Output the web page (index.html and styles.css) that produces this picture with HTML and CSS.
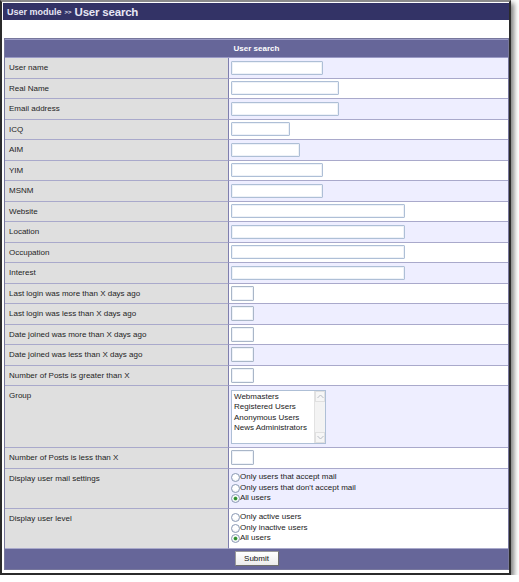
FILE: index.html
```html
<!DOCTYPE html>
<html lang="en">
<head>
<meta charset="utf-8">
<title>User search</title>
<link rel="stylesheet" href="styles.css">
</head>
<body>
<div class="window">
  <div class="titlebar"><span class="crumb">User module</span><span class="sep">&gt;&gt;</span><span class="title">User search</span></div>
  <form class="search">
    <table class="grid">
      <thead>
        <tr><th colspan="2">User search</th></tr>
      </thead>
      <tbody>
        <tr><td class="label">User name</td><td class="field"><input class="text w92" type="text"></td></tr>
        <tr><td class="label">Real Name</td><td class="field"><input class="text w108" type="text"></td></tr>
        <tr><td class="label">Email address</td><td class="field"><input class="text w108" type="text"></td></tr>
        <tr><td class="label">ICQ</td><td class="field"><input class="text w59" type="text"></td></tr>
        <tr><td class="label">AIM</td><td class="field"><input class="text w69" type="text"></td></tr>
        <tr><td class="label">YIM</td><td class="field"><input class="text w92" type="text"></td></tr>
        <tr><td class="label">MSNM</td><td class="field"><input class="text w92" type="text"></td></tr>
        <tr><td class="label">Website</td><td class="field"><input class="text w174" type="text"></td></tr>
        <tr><td class="label">Location</td><td class="field"><input class="text w174" type="text"></td></tr>
        <tr><td class="label">Occupation</td><td class="field"><input class="text w174" type="text"></td></tr>
        <tr><td class="label">Interest</td><td class="field"><input class="text w174" type="text"></td></tr>
        <tr><td class="label">Last login was more than X days ago</td><td class="field"><input class="text days" type="text"></td></tr>
        <tr><td class="label">Last login was less than X days ago</td><td class="field"><input class="text days" type="text"></td></tr>
        <tr><td class="label">Date joined was more than X days ago</td><td class="field"><input class="text days" type="text"></td></tr>
        <tr><td class="label">Date joined was less than X days ago</td><td class="field"><input class="text days" type="text"></td></tr>
        <tr><td class="label">Number of Posts is greater than X</td><td class="field"><input class="text days" type="text"></td></tr>
        <tr class="tall-group">
          <td class="label">Group</td>
          <td class="field top">
            <div class="listbox" role="listbox" aria-multiselectable="true">
              <ul class="options">
                <li>Webmasters</li>
                <li>Registered Users</li>
                <li>Anonymous Users</li>
                <li>News Administrators</li>
              </ul>
              <div class="scrollbar">
                <span class="arrow up"><svg width="7" height="5" viewBox="0 0 7 5"><path d="M0.5 4 L3.5 1 L6.5 4" fill="none" stroke="#b8bcc4" stroke-width="1"/></svg></span>
                <span class="track"></span>
                <span class="arrow down"><svg width="7" height="5" viewBox="0 0 7 5"><path d="M0.5 1 L3.5 4 L6.5 1" fill="none" stroke="#b8bcc4" stroke-width="1"/></svg></span>
              </div>
            </div>
          </td>
        </tr>
        <tr><td class="label">Number of Posts is less than X</td><td class="field"><input class="text days" type="text"></td></tr>
        <tr class="tall-radio">
          <td class="label">Display user mail settings</td>
          <td class="field">
            <label class="opt"><input type="radio" name="mail">Only users that accept mail</label>
            <label class="opt"><input type="radio" name="mail">Only users that don't accept mail</label>
            <label class="opt"><input type="radio" name="mail" checked>All users</label>
          </td>
        </tr>
        <tr class="tall-radio">
          <td class="label">Display user level</td>
          <td class="field">
            <label class="opt"><input type="radio" name="level">Only active users</label>
            <label class="opt"><input type="radio" name="level">Only inactive users</label>
            <label class="opt"><input type="radio" name="level" checked>All users</label>
          </td>
        </tr>
      </tbody>
      <tfoot>
        <tr><td colspan="2" class="actions"><button type="submit" class="submit">Submit</button></td></tr>
      </tfoot>
    </table>
  </form>
</div>
</body>
</html>
```

FILE: styles.css
```css
* { box-sizing: border-box; }

html, body {
  margin: 0;
  padding: 0;
  background: #ffffff;
}

body {
  font-family: "Liberation Sans", Arial, sans-serif;
  color: #222222;
}

.window {
  width: 511px;
  height: 575px;
  background: #ffffff;
  border: 2px solid #2b2b2b;
  border-top: 2px solid #8a8a8a;
  padding: 1px 0 0 1px;
  box-shadow: 3px 3px 5px rgba(0, 0, 0, 0.5);
}

.titlebar {
  height: 17px;
  background: #333366;
  color: #e6e6f4;
  padding-left: 4px;
  display: flex;
  align-items: center;
  white-space: nowrap;
}

.crumb {
  font-size: 9px;
  font-weight: bold;
}

.sep {
  font-size: 6px;
  font-weight: bold;
  margin: 1px 3px 0 3px;
}

.title {
  font-size: 11.5px;
  font-weight: bold;
  letter-spacing: -0.2px;
}

.search {
  margin: 18px 0 0 1px;
}

.grid {
  width: 505px;
  border-collapse: separate;
  border-spacing: 0;
  border: 1px solid #77779c;
  font-size: 8px;
}

.grid th {
  height: 19px;
  background: #666699;
  color: #ffffff;
  font-weight: bold;
  font-size: 8px;
  text-align: center;
  border-top: 1px solid #9a9ac6;
  border-bottom: 1px solid #9a9ac6;
  padding: 0;
}

.grid td {
  height: 20.5px;
  padding: 0;
  border-bottom: 1px solid #a9a9cb;
}

.label {
  width: 224px;
  background: #dfdfdf;
  border-right: 1px solid #7f7fae;
  vertical-align: top;
  padding: 4px 0 0 4px !important;
  line-height: 11px;
  color: #1e1e1e;
  white-space: nowrap;
}

.field {
  background: #ffffff;
  padding-left: 2px !important;
  vertical-align: middle;
}

.grid tbody tr:nth-child(odd) .field {
  background: #eeeeff;
}

.field.top {
  vertical-align: top;
}

.tall-group td { height: 62px; }
.tall-radio td { height: 40px; }

.text {
  display: block;
  height: 14px;
  margin: 0;
  padding: 0 2px;
  border: 1px solid #aebfd6;
  border-radius: 1px;
  background: #ffffff;
  box-shadow: inset 0 0 0 1px #eef2f8;
  font: 8px "Liberation Sans", Arial, sans-serif;
}

.w59 { width: 59px; }
.w69 { width: 69px; }
.w92 { width: 92px; }
.w108 { width: 108px; }
.w174 { width: 174px; }
.days { width: 23px; height: 15px; border-color: #a9b6c8; }

.listbox {
  margin-top: 4px;
  width: 95px;
  height: 54px;
  border: 1px solid #aebfd6;
  background: #ffffff;
  display: flex;
}

.options {
  flex: 1;
  list-style: none;
  margin: 0;
  padding: 1px 0 0 2px;
  font-size: 8px;
  line-height: 10.3px;
  color: #222222;
  white-space: nowrap;
}

.scrollbar {
  width: 11px;
  display: flex;
  flex-direction: column;
  background: #f3f3f3;
  border-left: 1px solid #e2e2e2;
}

.arrow {
  height: 11px;
  display: flex;
  align-items: center;
  justify-content: center;
  background: #f6f6f6;
  border: 1px solid #e0e0e0;
}

.track {
  flex: 1;
}

.opt {
  display: flex;
  align-items: center;
  height: 10.5px;
  line-height: 10.5px;
  color: #222222;
  white-space: nowrap;
}

.opt input[type="radio"] {
  appearance: none;
  -webkit-appearance: none;
  width: 9px;
  height: 9px;
  margin: 0;
  border: 1px solid #8b9ab4;
  border-radius: 50%;
  background: radial-gradient(circle at 50% 40%, #ffffff 40%, #e2e6ee 100%);
  display: inline-grid;
  place-content: center;
  flex: none;
}

.opt input[type="radio"]:checked::before {
  content: "";
  width: 3px;
  height: 3px;
  border-radius: 50%;
  background: #2f8a2f;
  box-shadow: 0 0 0 0.5px #5fb85f;
}

.actions {
  height: 20px !important;
  background: #666699;
  text-align: center;
  vertical-align: middle;
  border-bottom: 0 !important;
}

.submit {
  width: 44px;
  height: 15px;
  margin: 0;
  padding: 0;
  font: 8px "Liberation Sans", Arial, sans-serif;
  color: #111111;
  background: linear-gradient(#ffffff, #ececec);
  border: 1px solid #9a9a9a;
  border-right-color: #6e6e6e;
  border-bottom-color: #6e6e6e;
  border-radius: 1px;
}
```
